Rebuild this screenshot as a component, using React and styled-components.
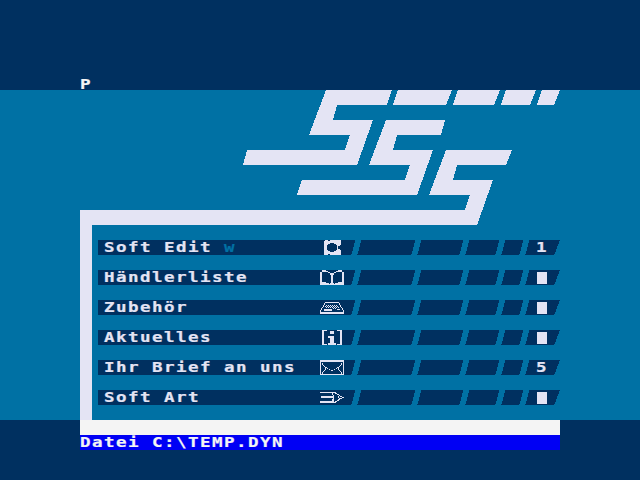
import React from "react";
import styled, { createGlobalStyle } from "styled-components";

const navy = "#003060";
const teal = "#0071a4";
const pale = "#e4e4f4";

const Global = createGlobalStyle`
  body { margin: 0; background: ${navy}; overflow: hidden; }
  * { box-sizing: border-box; }
`;

const Screen = styled.div`
  width: 640px;
  height: 480px;
  display: flex;
  flex-direction: column;
  background: ${navy};
  color: ${pale};
`;

const Header = styled.header`
  height: 90px;
  padding: 77px 80px 0;
  color: #f4f4f4;
`;

const Panel = styled.main`
  height: 330px;
  padding: 0 80px;
  background: ${teal};
`;

const Logo = styled.svg`
  display: block;
  width: 480px;
  height: 135px;
  fill: ${pale};
  shape-rendering: crispEdges;
`;

const Menu = styled.ul`
  list-style: none;
  margin: 0;
  height: 195px;
  padding: 15px 0 0 6px;
  border-left: 12px solid ${pale};
  display: flex;
  flex-direction: column;
  gap: 15px;
`;

const Row = styled.li`
  display: grid;
  grid-template-columns: 257px 58px 46px 34px 22px 35px;
  grid-template-rows: 15px;
  column-gap: 2px;
  height: 15px;
`;

/* The slanted ends step left one pixel at a time, in four steps. */
const rightEdge =
  "100% 0, 100% 3px, calc(100% - 1px) 3px, calc(100% - 1px) 7px, calc(100% - 2px) 7px, calc(100% - 2px) 11px, calc(100% - 3px) 11px, calc(100% - 3px) 14px, calc(100% - 4px) 14px, calc(100% - 4px) 100%";
const wideRightEdge =
  "100% 0, 100% 1px, calc(100% - 1px) 1px, calc(100% - 1px) 4px, calc(100% - 2px) 4px, calc(100% - 2px) 6px, calc(100% - 3px) 6px, calc(100% - 3px) 9px, calc(100% - 4px) 9px, calc(100% - 4px) 12px, calc(100% - 5px) 12px, calc(100% - 5px) 14px, calc(100% - 6px) 14px, calc(100% - 6px) 100%";
const leftEdge =
  "0 100%, 0 14px, 1px 14px, 1px 11px, 2px 11px, 2px 7px, 3px 7px, 3px 3px, 4px 3px, 4px 0";

const Segment = styled.div`
  display: flex;
  background: ${navy};
  clip-path: polygon(
    ${(p) => (p.$square ? "0 100%, 0 0" : leftEdge)},
    ${(p) => (p.$value ? wideRightEdge : rightEdge)}
  );
  ${(p) => p.$square && "padding-left: 6px;"}
  ${(p) => p.$value && "padding-left: 11px;"}
`;

const Label = styled.div`
  width: 216px;
  flex: none;
`;

const Glyphs = styled.span`
  display: block;
  width: max-content;
  font: bold 14px/15px "DejaVu Sans Mono", monospace;
  letter-spacing: 1.172px;
  -webkit-text-stroke: 0.2px currentColor;
  white-space: pre;
  transform: scaleX(1.25);
  transform-origin: 0 0;
`;

const Hint = styled.span`
  color: ${teal};
`;

const Icon = styled.svg`
  width: 24px;
  height: 15px;
  flex: none;
  fill: ${pale};
  stroke: none;
  shape-rendering: crispEdges;
`;

const Block = styled.span`
  width: 10px;
  height: 12px;
  margin: 2px 0 0 1px;
  background: ${pale};
`;

const Strip = styled.div`
  height: 15px;
  margin: 0 80px;
  background: #f4f4f4;
`;

const Status = styled.footer`
  height: 15px;
  margin: 0 80px;
  background: #0000f4;
  color: #f4f4f4;
`;

const icons = {
  disk: (
    <>
      <path d="M4 0H21V5H20V6H19V9H20V10H21V15H4Z" />
      <path fill={navy} d="M4 0h1v1h-1zM8 0h2v1h-2zM8 14h2v1h-2zM10 3h4v1h2v1h1v5h-1v1h-2v1h-4v-1h-2v-1h-1v-5h1v-1h2zM18 6h3v3h-3z" />
    </>
  ),
  book: (
    <path d="M0 2h2v12h-2zM22 2h2v12h-2zM2 0h4v2h-4zM18 0h4v2h-4zM6 1h2v1h-2zM16 1h2v1h-2zM8 2h2v1h-2zM14 2h2v1h-2zM10 3h4v2h-1v8h-2v-8h-1zM0 14h24v1h-24zM2 12h4v1h3v1h-8v-1h1zM18 12h4v1h1v1h-8v-1h3zM10 13h4v1h-4z" />
  ),
  typewriter: (
    <path d="M5 2h14v1h-14zM4 3h1v2h-1zM3 5h1v2h-1zM2 7h1v1h-1zM1 8h1v2h-1zM19 3h1v2h-1zM20 5h1v2h-1zM21 7h1v1h-1zM22 8h1v2h-1zM0 10h1v3h-1zM23 10h1v3h-1zM0 12h24v2h-24zM4 9h8v2h-8zM17 9h3v1h-3zM6 5h1v1h-1zM8 5h1v1h-1zM10 5h1v1h-1zM12 5h1v1h-1zM14 5h1v1h-1zM16 5h1v1h-1zM5 6h1v1h-1zM7 6h1v1h-1zM9 6h1v1h-1zM11 6h1v1h-1zM13 6h1v1h-1zM15 6h1v1h-1zM17 6h1v1h-1zM6 7h1v1h-1zM8 7h1v1h-1zM10 7h1v1h-1zM12 7h1v1h-1zM14 7h1v1h-1zM16 7h1v1h-1zM18 7h1v1h-1zM13 8h1v1h-1zM15 8h1v1h-1z" />
  ),
  info: (
    <path d="M2 0h5v1h-3v13h3v1h-5zM17 0h5v15h-5v-1h3v-13h-3zM10 1h4v3h-4zM8 6h6v7h2v2h-8v-2h2v-5h-2z" />
  ),
  mail: (
    <path fillRule="evenodd" d="M0 0h24v15h-24zM1 2v12h22v-12zM2 3h1v2h-1zM3 5h1v1h-1zM4 6h1v1h-1zM5 7h2v1h-2zM7 8h1v1h-1zM9 9h1v1h-1zM11 10h2v1h-2zM14 9h1v1h-1zM16 8h1v1h-1zM17 7h2v1h-2zM19 6h1v1h-1zM20 5h1v1h-1zM21 3h1v2h-1zM5 8h1v2h-1zM4 10h1v1h-1zM3 11h1v1h-1zM2 12h1v2h-1zM18 8h1v2h-1zM19 10h1v1h-1zM20 11h1v1h-1zM21 12h1v2h-1z" />
  ),
  pencil: (
    <path d="M0 2h16v1h-16zM12 3h1v2h-1zM13 5h1v5h-1zM1 6h12v2h-12zM0 11h13v2h-13zM12 9h2v4h-2zM15 3h2v1h-2zM17 4h2v1h-2zM19 5h1v1h-1zM20 6h2v1h-2zM22 7h2v1h-2zM19 8h3v1h-3zM18 9h2v1h-2zM17 10h2v1h-2zM15 11h2v1h-2zM13 12h3v1h-3zM18 6h1v1h-1zM18 7h1v1h-1z" />
  ),
};

const items = [
  { label: "Soft Edit", hint: "w", icon: "disk", value: "1" },
  { label: "Händlerliste", icon: "book" },
  { label: "Zubehör", icon: "typewriter" },
  { label: "Aktuelles", icon: "info" },
  { label: "Ihr Brief an uns", icon: "mail", value: "5" },
  { label: "Soft Art", icon: "pencil" },
];

export default function App() {
  return (
    <Screen>
      <Global />
      <Header>
        <Glyphs>P</Glyphs>
      </Header>
      <Panel>
        <Logo viewBox="80 90 480 135">
          <path d="M326 90H392L387 105H337L333 120H373L357 165H243L247 150H345L350 135H309Z" />
          <path d="M386 120H445L441 135H397L393 150H433L417 195H297L302 180H405L410 165H369Z" />
          <path d="M446 150H512L506 165H457L453 180H493L477 225H80V210H465L470 195H429Z" />
          <path d="M398 90H452L446 105H393ZM458 90H500L494 105H453ZM506 90H536L530 105H501ZM542 90H560L554 105H537Z" />
        </Logo>
        <Menu>
          {items.map((item) => (
            <Row key={item.label}>
              <Segment $square>
                <Label>
                  <Glyphs>
                    {item.label}
                    {item.hint && <Hint> {item.hint}</Hint>}
                  </Glyphs>
                </Label>
                <Icon viewBox="0 0 24 15">{icons[item.icon]}</Icon>
              </Segment>
              <Segment />
              <Segment />
              <Segment />
              <Segment />
              <Segment $value>
                {item.value ? <Glyphs>{item.value}</Glyphs> : <Block />}
              </Segment>
            </Row>
          ))}
        </Menu>
      </Panel>
      <Strip />
      <Status>
        <Glyphs>Datei C:\TEMP.DYN</Glyphs>
      </Status>
    </Screen>
  );
}
